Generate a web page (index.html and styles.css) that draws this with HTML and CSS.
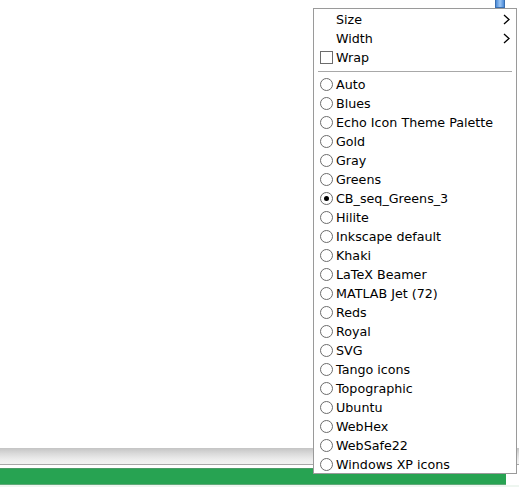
FILE: index.html
```html
<!DOCTYPE html>
<html>
<head>
<meta charset="utf-8">
<link rel="stylesheet" href="styles.css">
</head>
<body>
<div class="app">
  <div class="canvas"></div>
  <div class="toolbar"></div>
  <div class="divider"></div>
  <div class="statusrow"><div class="status"></div><div class="corner"></div></div>
  <div class="footer"></div>
  <div class="thumb"></div>
  <div class="menu">
    <div class="item"><span class="mark"></span><span class="label">Size</span><span class="arrow"><svg width="7" height="11" viewBox="0 0 7 11"><path d="M1 1 L6 5.5 L1 10" fill="none" stroke="#000" stroke-width="1.3"/></svg></span></div>
    <div class="item"><span class="mark"></span><span class="label">Width</span><span class="arrow"><svg width="7" height="11" viewBox="0 0 7 11"><path d="M1 1 L6 5.5 L1 10" fill="none" stroke="#000" stroke-width="1.3"/></svg></span></div>
    <div class="item"><span class="mark"><span class="check"></span></span><span class="label">Wrap</span></div>
    <div class="sep"></div>
    <div class="item"><span class="mark"><span class="radio"></span></span><span class="label">Auto</span></div>
    <div class="item"><span class="mark"><span class="radio"></span></span><span class="label">Blues</span></div>
    <div class="item"><span class="mark"><span class="radio"></span></span><span class="label">Echo Icon Theme Palette</span></div>
    <div class="item"><span class="mark"><span class="radio"></span></span><span class="label">Gold</span></div>
    <div class="item"><span class="mark"><span class="radio"></span></span><span class="label">Gray</span></div>
    <div class="item"><span class="mark"><span class="radio"></span></span><span class="label">Greens</span></div>
    <div class="item"><span class="mark"><span class="radio on"></span></span><span class="label">CB_seq_Greens_3</span></div>
    <div class="item"><span class="mark"><span class="radio"></span></span><span class="label">Hilite</span></div>
    <div class="item"><span class="mark"><span class="radio"></span></span><span class="label">Inkscape default</span></div>
    <div class="item"><span class="mark"><span class="radio"></span></span><span class="label">Khaki</span></div>
    <div class="item"><span class="mark"><span class="radio"></span></span><span class="label">LaTeX Beamer</span></div>
    <div class="item"><span class="mark"><span class="radio"></span></span><span class="label">MATLAB Jet (72)</span></div>
    <div class="item"><span class="mark"><span class="radio"></span></span><span class="label">Reds</span></div>
    <div class="item"><span class="mark"><span class="radio"></span></span><span class="label">Royal</span></div>
    <div class="item"><span class="mark"><span class="radio"></span></span><span class="label">SVG</span></div>
    <div class="item"><span class="mark"><span class="radio"></span></span><span class="label">Tango icons</span></div>
    <div class="item"><span class="mark"><span class="radio"></span></span><span class="label">Topographic</span></div>
    <div class="item"><span class="mark"><span class="radio"></span></span><span class="label">Ubuntu</span></div>
    <div class="item"><span class="mark"><span class="radio"></span></span><span class="label">WebHex</span></div>
    <div class="item"><span class="mark"><span class="radio"></span></span><span class="label">WebSafe22</span></div>
    <div class="item"><span class="mark"><span class="radio"></span></span><span class="label">Windows XP icons</span></div>
  </div>
</div>
</body>
</html>
```
FILE: styles.css
```css
html, body { margin: 0; padding: 0; background: #fff; }
.app {
  position: relative;
  width: 519px;
  height: 487px;
  overflow: hidden;
  display: flex;
  flex-direction: column;
  font-family: "DejaVu Sans", sans-serif;
  font-size: 12.7px;
}
.canvas { height: 448px; background: #fff; }
.toolbar {
  height: 16px;
  background: linear-gradient(#c4c4c4, #dadada 35%, #ececec 70%, #f2f2f2);
}
.divider {
  height: 4px;
  background: #fff;
  border-top: 1px solid #a8a8a8;
  box-sizing: border-box;
}
.statusrow { display: flex; height: 17px; }
.status {
  width: 506px;
  background: #27a352;
  border-top: 1px solid #4b9b67;
  border-bottom: 1px solid #5fa878;
  box-sizing: border-box;
}
.corner { flex: 1; background: #fff; }
.footer { flex: 1; background: #eef6f0; }
.thumb {
  position: absolute;
  left: 495px;
  top: 0;
  width: 10px;
  height: 8px;
  background: linear-gradient(90deg, #4a8ad8, #9cc6f4 50%, #4a8ad8);
  border: 1px solid #3a6fb0;
  border-top: none;
  box-sizing: border-box;
}
.menu {
  position: absolute;
  left: 313px;
  top: 8px;
  width: 204px;
  height: 466px;
  box-sizing: border-box;
  background: #fff;
  border: 1px solid #9a9a9a;
  padding-top: 1px;
  color: #000;
}
.item {
  display: flex;
  align-items: center;
  height: 19px;
  position: relative;
}
.mark {
  width: 22px;
  flex: none;
  display: flex;
  align-items: center;
  padding-left: 6px;
  box-sizing: border-box;
}
.label { flex: 1; white-space: nowrap; }
.arrow {
  position: absolute;
  right: 6px;
  top: 4px;
  display: block;
  line-height: 0;
}
.check {
  display: block;
  width: 13px;
  height: 13px;
  box-sizing: border-box;
  border: 1px solid #6c6c6c;
  background: #fff;
}
.radio {
  display: block;
  width: 13px;
  height: 13px;
  box-sizing: border-box;
  border: 1px solid #6c6c6c;
  border-radius: 50%;
  background: #fff;
  position: relative;
}
.radio.on::after {
  content: "";
  position: absolute;
  left: 3px;
  top: 3px;
  width: 5px;
  height: 5px;
  border-radius: 50%;
  background: #000;
}
.sep {
  height: 8px;
  display: flex;
  align-items: center;
  padding: 0 4px;
}
.sep::before {
  content: "";
  flex: 1;
  height: 1px;
  background: #a8a8a8;
}
```
